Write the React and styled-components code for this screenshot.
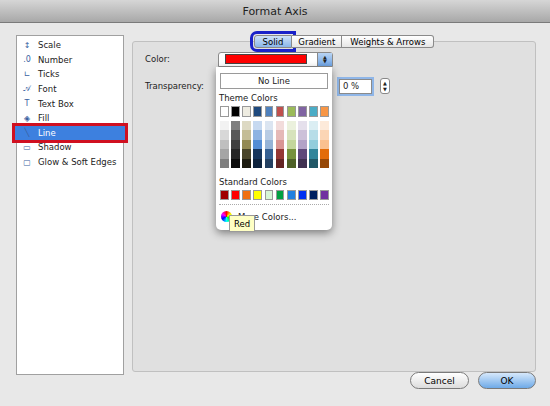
import styled, { createGlobalStyle } from 'styled-components';

const Global = createGlobalStyle`
  body { margin: 0; font-family: "Lucida Grande", "DejaVu Sans", sans-serif; background: #9a9a9a; }
`;

const Window = styled.div`
  width: 550px;
  height: 406px;
  background: #e8e8e8;
  display: flex;
  flex-direction: column;
  position: relative;
  overflow: hidden;
`;

const TitleBar = styled.div`
  height: 22px;
  background: linear-gradient(#d6d6d6, #a8a8a8);
  border-bottom: 1px solid #7a7a7a;
  display: flex;
  align-items: center;
  justify-content: center;
  font-size: 11px;
  color: #222;
`;

const Body = styled.div`
  flex: 1;
  display: flex;
  gap: 8px;
  padding: 12px 14px 0 16px;
  height: 327px;
`;

const Sidebar = styled.div`
  width: 106px;
  height: 336px;
  background: #fff;
  border: 1px solid #a0a0a0;
  padding-top: 2px;
  position: relative;
`;

const Item = styled.div`
  height: 14.6px;
  display: flex;
  align-items: center;
  gap: 5px;
  padding-left: 4px;
  font-size: 8.5px;
  color: ${p => (p.$sel ? '#fff' : '#222')};
  background: ${p => (p.$sel ? '#3d80df' : 'transparent')};
  position: relative;
  ${p => p.$sel && `outline: 3px solid #d01020; outline-offset: 0px; margin: 0 -2px; padding-left: 6px;`}
`;

const Icon = styled.span`
  width: 12px;
  height: 11px;
  display: inline-flex;
  align-items: center;
  justify-content: center;
  font-size: 8px;
  color: #3a5fa0;
`;

const Right = styled.div`
  flex: 1;
  display: flex;
  flex-direction: column;
  position: relative;
`;

const Tabs = styled.div`
  display: flex;
  align-self: center;
  margin-left: 20px;
  position: relative;
  z-index: 2;
  height: 14px;
`;

const Tab = styled.div`
  padding: 0 ${p => p.$pad}px;
  font-size: 8.5px;
  display: flex;
  align-items: center;
  border: 1px solid #8a8a8a;
  border-left: ${p => (p.$first ? '1px solid #8a8a8a' : 'none')};
  border-radius: ${p => p.$r};
  background: ${p => (p.$active ? 'linear-gradient(#cfe2f8, #8ab6ea)' : 'linear-gradient(#fff, #e6e6e6)')};
  outline: ${p => (p.$active ? '3px solid #1a22c8' : 'none')};
  outline-offset: 1px;
`;

const Panel = styled.div`
  margin-top: -7px;
  height: 325px;
  background: #e0e0e0;
  border: 1px solid #c0c0c0;
  border-radius: 3px;
  padding: 9px 12px;
  font-size: 8.5px;
  color: #222;
`;

const Row = styled.div`
  display: flex;
  align-items: center;
  height: 16px;
  margin-bottom: ${p => p.$mb || 0}px;
`;

const Label = styled.span`
  width: 73px;
  flex-shrink: 0;
`;

const Dropdown = styled.div`
  width: 115px;
  height: 15px;
  border: 1px solid #8a8a8a;
  border-radius: 3px 3px 0 0;
  background: #fff;
  display: flex;
  align-items: center;
  padding-left: 6px;
  box-sizing: border-box;
  flex-shrink: 0;
`;

const RedBar = styled.div`
  width: 80px;
  height: 8px;
  background: #f00;
  border: 1px solid #444;
`;

const Arrow = styled.div`
  margin-left: auto;
  width: 14px;
  height: 13px;
  background: linear-gradient(#b9d4f3, #6ea3e4);
  border-left: 1px solid #888;
  font-size: 5px;
  display: flex;
  align-items: center;
  justify-content: center;
  line-height: 0.8;
  flex-direction: column;
`;

const Field = styled.div`
  margin-left: 121px;
  width: 28px;
  height: 13px;
  border: 1px solid #8a8a8a;
  box-shadow: 0 0 0 2px #8fb6e8;
  background: #fff;
  display: flex;
  align-items: center;
  padding-left: 3px;
`;

const Stepper = styled.div`
  margin-left: 8px;
  width: 8px;
  height: 14px;
  border: 1px solid #888;
  border-radius: 3px;
  background: #fff;
  font-size: 5px;
  display: flex;
  flex-direction: column;
  align-items: center;
  justify-content: center;
`;

const Popup = styled.div`
  position: absolute;
  left: 216px;
  top: 67px;
  width: 116px;
  height: 163px;
  background: #fff;
  border-radius: 0 0 5px 5px;
  box-shadow: 0 3px 8px rgba(0,0,0,0.45);
  padding: 6px 3px 0 3px;
  box-sizing: border-box;
  font-size: 8.5px;
  color: #222;
  z-index: 5;
`;

const NoLine = styled.div`
  height: 14px;
  margin: 0 1px;
  border: 1px solid #9a9a9a;
  display: flex;
  align-items: center;
  justify-content: center;
`;

const Heading = styled.div`
  margin: ${p => p.$mt || 4}px 0 3px;
`;

const SwatchRow = styled.div`
  display: flex;
  gap: 2.5px;
  padding-left: 1px;
`;

const Swatch = styled.div`
  width: 8.5px;
  height: 8.5px;
  border: 1px solid #999;
  background: ${p => p.$c};
  position: relative;
`;

const Strip = styled.div`
  width: 9.5px;
  height: 48px;
  display: flex;
  flex-direction: column;
  margin-top: 4px;
`;

const Tint = styled.div`
  flex: 1;
  background: ${p => p.$c};
`;

const Dots = styled.div`
  border-top: 1px dotted #aaa;
  margin: 4px 0 6px;
`;

const More = styled.div`
  display: flex;
  align-items: center;
  gap: 6px;
  padding-left: 2px;
`;

const Wheel = styled.div`
  width: 11px;
  height: 11px;
  border-radius: 50%;
  background: conic-gradient(red, yellow, lime, cyan, blue, magenta, red);
`;

const Tooltip = styled.div`
  position: absolute;
  left: 229px;
  top: 215px;
  width: 24px;
  height: 15px;
  background: #ffffc4;
  border: 1px solid #999;
  font-size: 8.5px;
  display: flex;
  align-items: center;
  justify-content: center;
  z-index: 6;
`;

const Footer = styled.div`
  display: flex;
  justify-content: flex-end;
  gap: 9px;
  padding: 0 14px 17px;
`;

const Button = styled.div`
  width: ${p => p.$w}px;
  height: 15px;
  border-radius: 9px;
  border: 1px solid #7a7a7a;
  background: ${p => (p.$primary ? 'linear-gradient(#d6e8fb, #6eaae8)' : 'linear-gradient(#fff, #dcdcdc)')};
  font-size: 9px;
  display: flex;
  align-items: center;
  justify-content: center;
`;

const items = [
  ['↕', 'Scale'], ['.0', 'Number'], ['∟', 'Ticks'], ['𝒜', 'Font'], ['T', 'Text Box'],
  ['◈', 'Fill'], ['╲', 'Line'], ['▭', 'Shadow'], ['▢', 'Glow & Soft Edges'],
];

const theme = ['#fff', '#000', '#eeece1', '#1f497d', '#4f81bd', '#c0504d', '#9bbb59', '#8064a2', '#4bacc6', '#f79646'];
const tints = [
  ['#f2f2f2', '#d8d8d8', '#bfbfbf', '#a5a5a5', '#7f7f7f'],
  ['#7f7f7f', '#595959', '#3f3f3f', '#262626', '#0c0c0c'],
  ['#ddd9c3', '#c4bd97', '#938953', '#494429', '#1d1b10'],
  ['#c6d9f0', '#8db3e2', '#548dd4', '#17365d', '#0f243e'],
  ['#dbe5f1', '#b8cce4', '#95b3d7', '#366092', '#244061'],
  ['#f2dcdb', '#e5b9b7', '#d99694', '#953734', '#632423'],
  ['#ebf1dd', '#d7e3bc', '#c3d69b', '#76923c', '#4f6128'],
  ['#e5e0ec', '#ccc1d9', '#b2a2c7', '#5f497a', '#3f3151'],
  ['#dbeef3', '#b7dde8', '#92cddc', '#31859b', '#205867'],
  ['#fdeada', '#fbd5b5', '#fac08f', '#e36c09', '#974806'],
];
const standard = ['#a00000', '#ff0000', '#f07010', '#ffff00', '#d6f5d6', '#00a040', '#2080e0', '#0030f0', '#002060', '#7030a0'];

export default function App() {
  return (
    <Window>
      <Global />
      <TitleBar>Format Axis</TitleBar>
      <Body>
        <Sidebar>
          {items.map(([ic, t]) => (
            <Item key={t} $sel={t === 'Line'}>
              <Icon>{ic}</Icon>
              {t}
            </Item>
          ))}
        </Sidebar>
        <Right>
          <Tabs>
            <Tab $first $active $pad={8} $r="3px 0 0 3px">Solid</Tab>
            <Tab $pad={6} $r="0">Gradient</Tab>
            <Tab $pad={8} $r="0 3px 3px 0">Weights &amp; Arrows</Tab>
          </Tabs>
          <Panel>
            <Row $mb={11}>
              <Label>Color:</Label>
              <Dropdown>
                <RedBar />
                <Arrow><span>▲</span><span>▼</span></Arrow>
              </Dropdown>
            </Row>
            <Row>
              <Label>Transparency:</Label>
              <Field>0 %</Field>
              <Stepper><span>▲</span><span>▼</span></Stepper>
            </Row>
          </Panel>
        </Right>
      </Body>
      <Footer>
        <Button $w={57}>Cancel</Button>
        <Button $w={56} $primary>OK</Button>
      </Footer>
      <Popup>
        <NoLine>No Line</NoLine>
        <Heading>Theme Colors</Heading>
        <SwatchRow>{theme.map(c => <Swatch key={c} $c={c} />)}</SwatchRow>
        <SwatchRow>
          {tints.map((col, i) => (
            <Strip key={i}>{col.map(c => <Tint key={c} $c={c} />)}</Strip>
          ))}
        </SwatchRow>
        <Heading $mt={8}>Standard Colors</Heading>
        <SwatchRow>{standard.map(c => <Swatch key={c} $c={c} />)}</SwatchRow>
        <Dots />
        <More><Wheel />More Colors...</More>
      </Popup>
      <Tooltip>Red</Tooltip>
    </Window>
  );
}
